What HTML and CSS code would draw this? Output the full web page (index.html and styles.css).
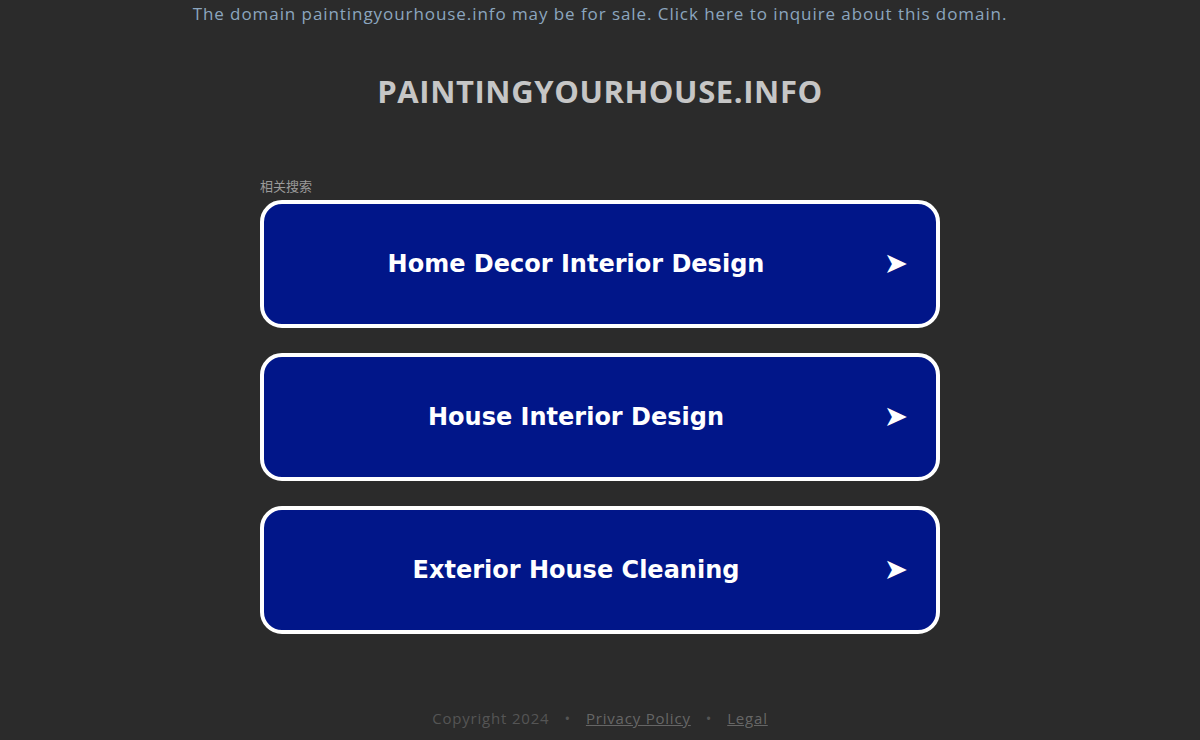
FILE: index.html
```html
<!DOCTYPE html>
<html lang="en">
<head>
<meta charset="utf-8">
<title>paintingyourhouse.info</title>
<link rel="stylesheet" href="styles.css">
</head>
<body>
<div class="page">
  <a class="forsale" href="#">The domain paintingyourhouse.info may be for sale. Click here to inquire about this domain.</a>
  <h1 class="domain">PAINTINGYOURHOUSE.INFO</h1>
  <div class="related">
    <div class="label">相关搜索</div>
    <a class="btn" href="#"><span class="btn-text">Home Decor Interior Design</span><span class="arrow">➤</span></a>
    <a class="btn" href="#"><span class="btn-text">House Interior Design</span><span class="arrow">➤</span></a>
    <a class="btn" href="#"><span class="btn-text">Exterior House Cleaning</span><span class="arrow">➤</span></a>
  </div>
  <div class="footer">
    <span>Copyright 2024</span>
    <span class="dot">•</span>
    <a href="#">Privacy Policy</a>
    <span class="dot">•</span>
    <a href="#">Legal</a>
  </div>
</div>
</body>
</html>
```

FILE: styles.css
```css
html, body {
  margin: 0;
  padding: 0;
  background: #2b2b2b;
}
.page {
  display: flex;
  flex-direction: column;
  align-items: center;
  height: 740px;
  font-family: "Open Sans", "Noto Sans", sans-serif;
}
.forsale {
  margin-top: 2px;
  font-size: 17px;
  letter-spacing: 0.93px;
  line-height: 24px;
  color: #8ca6bf;
  text-decoration: none;
}
.domain {
  margin: 45px 0 0;
  font-size: 31px;
  line-height: 40px;
  font-weight: 700;
  color: #c6c6c6;
  letter-spacing: 0.6px;
}
.related {
  width: 680px;
  margin-top: 67px;
  display: flex;
  flex-direction: column;
  gap: 25px;
}
.label {
  font-family: "Noto Sans CJK SC", sans-serif;
  font-size: 13px;
  line-height: 16px;
  color: #9a9a9a;
  margin-bottom: -19px;
}
.btn {
  box-sizing: border-box;
  height: 128px;
  border: 4px solid #ffffff;
  border-radius: 22px;
  background: #011689;
  display: flex;
  align-items: center;
  justify-content: center;
  position: relative;
  text-decoration: none;
}
.btn-text {
  font-family: "DejaVu Sans", Verdana, sans-serif;
  font-weight: 700;
  font-size: 24px;
  color: #ffffff;
  margin-left: -48px;
}
.arrow {
  position: absolute;
  right: 28px;
  top: 50%;
  transform: translateY(-52%);
  font-family: "DejaVu Sans", sans-serif;
  font-size: 29px;
  color: #ffffff;
}
.footer {
  margin-top: auto;
  margin-bottom: 12px;
  font-size: 15px;
  letter-spacing: 0.8px;
  color: #555555;
  display: flex;
  gap: 15px;
}
.footer a {
  color: #666666;
  text-decoration: underline;
}
.dot {
  color: #555555;
}
```
